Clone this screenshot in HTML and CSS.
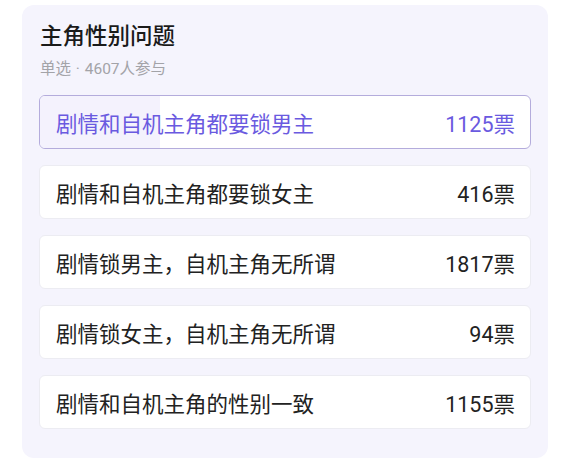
FILE: index.html
```html
<!DOCTYPE html>
<html lang="zh-CN">
<head>
<meta charset="utf-8">
<link rel="stylesheet" href="styles.css">
</head>
<body>
<div class="card">
  <div class="title">主角性别问题</div>
  <div class="meta">单选 · 4607人参与</div>
  <div class="options">
    <div class="option selected">
      <div class="fill" style="width:24.4%"></div>
      <span class="label">剧情和自机主角都要锁男主</span>
      <span class="count">1125票</span>
    </div>
    <div class="option">
      <span class="label">剧情和自机主角都要锁女主</span>
      <span class="count">416票</span>
    </div>
    <div class="option">
      <span class="label">剧情锁男主，自机主角无所谓</span>
      <span class="count">1817票</span>
    </div>
    <div class="option">
      <span class="label">剧情锁女主，自机主角无所谓</span>
      <span class="count">94票</span>
    </div>
    <div class="option">
      <span class="label">剧情和自机主角的性别一致</span>
      <span class="count">1155票</span>
    </div>
  </div>
</div>
</body>
</html>
```

FILE: styles.css
```css
html, body {
  margin: 0;
  padding: 0;
  background: #ffffff;
}
body {
  font-family: Roboto, "Noto Sans CJK SC", sans-serif;
  padding: 5px 0 0 22px;
}
.card {
  width: 526px;
  box-sizing: border-box;
  background: #f5f4fd;
  border-radius: 12px;
  padding: 16px 17px 29px 17px;
}
.title {
  font-size: 22.5px;
  line-height: 30px;
  font-weight: 500;
  color: #1a1a1a;
  padding-left: 1px;
}
.meta {
  margin-top: 8px;
  font-size: 15.5px;
  line-height: 20px;
  color: #a3a3a8;
  padding-left: 1px;
  word-spacing: 1px;
}
.options {
  margin-top: 16px;
  display: flex;
  flex-direction: column;
  gap: 16px;
}
.option {
  position: relative;
  height: 54px;
  box-sizing: border-box;
  background: #ffffff;
  border: 1px solid #ececf2;
  border-radius: 6px;
  display: flex;
  align-items: center;
  justify-content: space-between;
  padding: 0 15px 0 16px;
  overflow: hidden;
  font-size: 21.5px;
  font-weight: 400;
  color: #222222;
}
.option.selected {
  border-color: #b4acdc;
  color: #6a5ae0;
}
.fill {
  position: absolute;
  left: 0;
  top: 0;
  bottom: 0;
  background: #f4f2fd;
}
.label, .count {
  position: relative;
}
```
